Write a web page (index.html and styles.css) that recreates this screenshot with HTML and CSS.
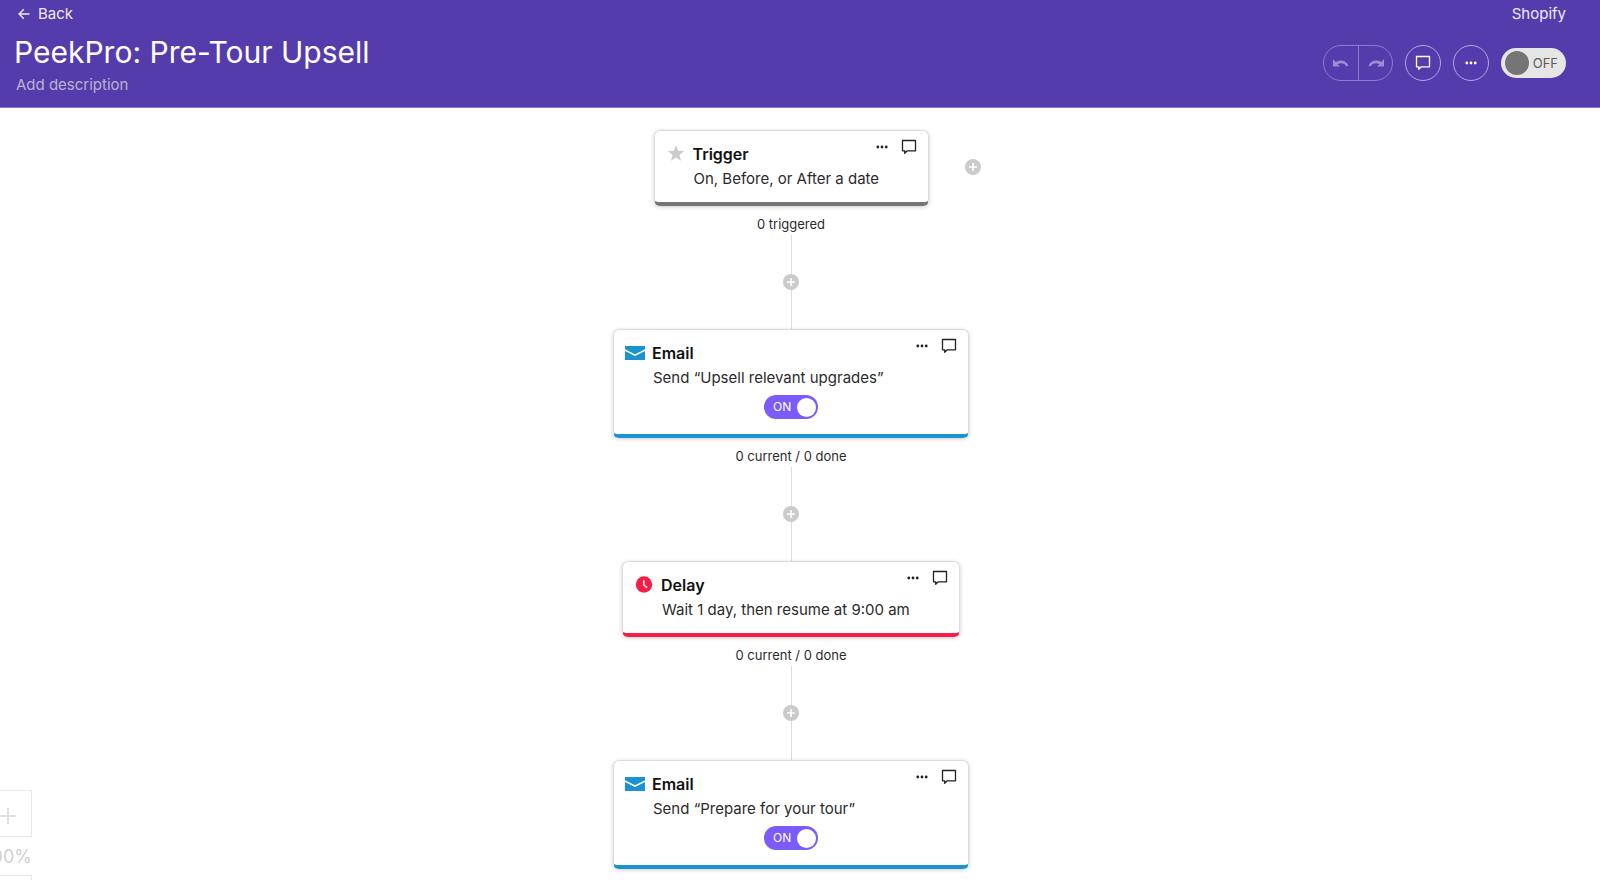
FILE: index.html
```html
<!DOCTYPE html>
<html lang="en">
<head>
    <meta charset="UTF-8">
    <meta name="viewport" content="width=device-width, initial-scale=1.0">
    <title>PeekPro: Pre-Tour Upsell</title>
    <link rel="stylesheet" href="styles.css">
</head>
<body>
    <!-- Shared icons -->
    <svg class="sprite" aria-hidden="true">
        <symbol id="comment" viewBox="0 0 16 16">
            <path d="M1.500 1.500h13v10.300H6.200L3.700 14.200V11.800H1.500z" fill="none" stroke="currentColor" stroke-width="1.300" stroke-linejoin="round"/>
        </symbol>
        <symbol id="dots" viewBox="0 0 14 14">
            <circle cx="2.800" cy="7" r="1.400"/><circle cx="7" cy="7" r="1.400"/><circle cx="11.200" cy="7" r="1.400"/>
        </symbol>
        <symbol id="add" viewBox="0 0 16 16">
            <circle cx="8" cy="8" r="8" fill="#cbcbcb"/>
            <path d="M8 4v8M4 8h8" stroke="#fff" stroke-width="1.600"/>
        </symbol>
        <symbol id="mail" viewBox="0 0 20 14">
            <path d="M0 0h20v3.300L10 8.200 0 3.300z"/>
            <path d="M0 5.100l10 5 10-5V14H0z"/>
        </symbol>
        <symbol id="undo" viewBox="0 0 18 12">
            <path d="M1 2v7.500h7L5.600 7.200C8.600 5.400 12.300 5.800 14.500 9.400l2-.9C13.900 3.200 8.300 2.200 3.700 5z"/>
        </symbol>
    </svg>

    <header class="header">
        <div class="header-top">
            <a href="#" class="back">
                <svg class="back-icon" viewBox="0 0 12 12"><path d="M11.500 6H1.200M5.800 1.300L1.100 6l4.700 4.700" fill="none" stroke="currentColor" stroke-width="1.400"/></svg>
                Back
            </a>
            <a href="#" class="store">Shopify</a>
        </div>
        <div class="header-main">
            <div class="heading">
                <h1>PeekPro: Pre-Tour Upsell</h1>
                <input type="text" class="description" placeholder="Add description" aria-label="Description">
            </div>
            <div class="actions">
                <div class="history">
                    <button type="button" aria-label="Undo" disabled><svg class="history-icon"><use href="#undo"/></svg></button>
                    <button type="button" aria-label="Redo" disabled><svg class="history-icon redo"><use href="#undo"/></svg></button>
                </div>
                <button type="button" class="round-btn" aria-label="Comments"><svg class="icon-comment"><use href="#comment"/></svg></button>
                <button type="button" class="round-btn" aria-label="More"><svg class="icon-dots"><use href="#dots"/></svg></button>
                <label class="switch switch-large"><input type="checkbox">OFF</label>
            </div>
        </div>
    </header>

    <main class="canvas">
        <section class="node">
            <div class="card trigger">
                <svg class="card-icon" viewBox="0 0 20 24"><path d="M10 3l2.100 5.800 6.100.3-4.800 3.800 1.700 5.900L10 15.500l-5.100 3.300 1.700-5.900-4.800-3.800 6.100-.3z"/></svg>
                <div class="card-body">
                    <h2>Trigger</h2>
                    <p>On, Before, or After a date</p>
                </div>
                <div class="card-tools">
                    <button type="button" aria-label="More"><svg class="icon-dots"><use href="#dots"/></svg></button>
                    <button type="button" aria-label="Comments"><svg class="icon-comment"><use href="#comment"/></svg></button>
                </div>
                <button type="button" class="add-btn add-side" aria-label="Add trigger"><svg><use href="#add"/></svg></button>
            </div>
            <p class="status">0 triggered</p>
            <div class="connector">
                <button type="button" class="add-btn" aria-label="Add step"><svg><use href="#add"/></svg></button>
            </div>
        </section>

        <section class="node">
            <div class="card email">
                <svg class="card-icon"><use href="#mail"/></svg>
                <div class="card-body">
                    <h2>Email</h2>
                    <p>Send “Upsell relevant upgrades”</p>
                </div>
                <div class="card-tools">
                    <button type="button" aria-label="More"><svg class="icon-dots"><use href="#dots"/></svg></button>
                    <button type="button" aria-label="Comments"><svg class="icon-comment"><use href="#comment"/></svg></button>
                </div>
                <label class="switch"><input type="checkbox" checked>ON</label>
            </div>
            <p class="status">0 current / 0 done</p>
            <div class="connector">
                <button type="button" class="add-btn" aria-label="Add step"><svg><use href="#add"/></svg></button>
            </div>
        </section>

        <section class="node">
            <div class="card delay">
                <svg class="card-icon" viewBox="0 0 20 24"><circle cx="10" cy="11.500" r="8.200"/><path d="M9.800 7v5l3.400 2.600" fill="none" stroke="#fff" stroke-width="1.400"/></svg>
                <div class="card-body">
                    <h2>Delay</h2>
                    <p>Wait 1 day, then resume at 9:00 am</p>
                </div>
                <div class="card-tools">
                    <button type="button" aria-label="More"><svg class="icon-dots"><use href="#dots"/></svg></button>
                    <button type="button" aria-label="Comments"><svg class="icon-comment"><use href="#comment"/></svg></button>
                </div>
            </div>
            <p class="status">0 current / 0 done</p>
            <div class="connector">
                <button type="button" class="add-btn" aria-label="Add step"><svg><use href="#add"/></svg></button>
            </div>
        </section>

        <section class="node">
            <div class="card email">
                <svg class="card-icon"><use href="#mail"/></svg>
                <div class="card-body">
                    <h2>Email</h2>
                    <p>Send “Prepare for your tour”</p>
                </div>
                <div class="card-tools">
                    <button type="button" aria-label="More"><svg class="icon-dots"><use href="#dots"/></svg></button>
                    <button type="button" aria-label="Comments"><svg class="icon-comment"><use href="#comment"/></svg></button>
                </div>
                <label class="switch"><input type="checkbox" checked>ON</label>
            </div>
        </section>
    </main>

    <div class="zoom">
        <button type="button" aria-label="Zoom in"><svg viewBox="0 0 16 16"><path d="M8 0v16M0 8h16" stroke="#e2e2e2" stroke-width="2"/></svg></button>
        <span>100%</span>
        <button type="button" aria-label="Zoom out"><svg viewBox="0 0 16 16"><path d="M0 8h16" stroke="#e2e2e2" stroke-width="2"/></svg></button>
    </div>
</body>
</html>
```
FILE: styles.css
```css
* {
    box-sizing: border-box;
}

body {
    margin: 0;
    height: 100vh;
    overflow: hidden;
    font-family: Inter, "Liberation Sans", sans-serif;
    font-size: 15px;
    line-height: 24px;
    color: #2b2b2b;
    background: #fff;
}

h1, h2, p {
    margin: 0;
}

button {
    display: flex;
    align-items: center;
    justify-content: center;
    padding: 0;
    border: none;
    background: none;
    color: inherit;
    cursor: pointer;
}

svg {
    display: block;
    fill: currentColor;
}

.sprite {
    position: absolute;
    width: 0;
    height: 0;
}

.icon-comment {
    width: 16px;
    height: 16px;
}

.icon-dots {
    width: 14px;
    height: 14px;
}

/* Header */
.header {
    padding: 2px 34px 10px 14px;
    background: #543cad;
    border-bottom: 1px solid #8776c6;
    color: #fff;
}

.header-top, .header-main {
    display: flex;
    justify-content: space-between;
}

.back, .store {
    display: flex;
    align-items: center;
    color: #eeebf8;
    text-decoration: none;
}

.back {
    gap: 8px;
    padding-left: 4px;
}

.back-icon {
    width: 12px;
    height: 12px;
}

.header-main {
    align-items: center;
}

h1 {
    padding-top: 8px;
    font-size: 30px;
    font-weight: 400;
    line-height: 36px;
}

.description {
    display: block;
    width: 300px;
    height: 24px;
    margin-top: 3px;
    padding: 0 2px;
    border: none;
    outline: none;
    background: none;
    color: #fff;
    font: inherit;
}

.description::placeholder {
    color: #b9b4cd;
    opacity: 1;
}

.actions {
    display: flex;
    align-items: center;
    gap: 12px;
    padding-top: 3px;
}

.history {
    display: flex;
    border: 1px solid #8d7cc9;
    border-radius: 18px;
    color: #9c8fcf;
}

.history button {
    width: 34px;
    height: 34px;
}

.history button + button {
    border-left: 1px solid #8d7cc9;
}

.history-icon {
    width: 18px;
    height: 12px;
}

.redo {
    transform: scaleX(-1);
}

.round-btn {
    width: 36px;
    height: 36px;
    border: 1px solid #b5a9e0;
    border-radius: 50%;
}

/* Switches */
.switch {
    display: flex;
    flex-direction: row-reverse;
    align-items: center;
    justify-content: space-between;
    width: 54px;
    height: 24px;
    padding: 0 2px 0 9px;
    border-radius: 12px;
    background: #7b5cfa;
    color: #fff;
    font-size: 12px;
    cursor: pointer;
}

.switch input {
    appearance: none;
    width: 19px;
    height: 19px;
    margin: 0;
    border-radius: 50%;
    background: #fff;
}

.switch-large {
    flex-direction: row;
    width: 65px;
    height: 30px;
    padding: 0 8px 0 4px;
    border-radius: 15px;
    background: #e6e6e6;
    color: #5c5c5c;
    font-size: 13px;
}

.switch-large input {
    width: 24px;
    height: 24px;
    background: #757575;
}

/* Flow */
.canvas {
    display: flex;
    flex-direction: column;
    align-items: center;
    padding: 22px 18px 0 0;
}

.node {
    display: flex;
    flex-direction: column;
    align-items: center;
}

.card {
    position: relative;
    display: grid;
    grid-template-columns: 20px 1fr;
    column-gap: 7px;
    padding: 11px;
    border: 1px solid #dcdcdc;
    border-bottom: 4px solid;
    border-radius: 6px;
    box-shadow: 0 1px 4px rgba(0, 0, 0, 0.2);
}

.card-icon {
    width: 20px;
    height: 24px;
}

.card h2 {
    color: #111;
    font-size: 16px;
    font-weight: 600;
    line-height: 24px;
}

.card-body p {
    padding: 1px 0 0 1px;
    line-height: 24px;
    white-space: nowrap;
}

.card-tools {
    position: absolute;
    top: 8px;
    right: 11px;
    display: flex;
    align-items: center;
    gap: 12px;
    color: #222;
}

.card .switch {
    grid-column: 1 / -1;
    justify-self: center;
    margin: 5px 0 4px;
}

.trigger {
    width: 275px;
    border-bottom-color: #757575;
}

.trigger .card-icon {
    color: #cbcbcb;
}

.email {
    width: 356px;
    border-bottom-color: #1a93d0;
}

.email .card-icon {
    color: #1a93d0;
}

.delay {
    width: 338px;
    border-bottom-color: #f71e46;
}

.delay .card-icon {
    color: #f71e46;
}

.status {
    padding: 8px 0 1px;
    font-size: 13px;
    line-height: 20px;
}

.connector {
    display: flex;
    align-items: center;
    justify-content: center;
    width: 16px;
    height: 94px;
    background: linear-gradient(#dcdcdc, #dcdcdc) center / 1px 100% no-repeat;
}

.add-btn svg {
    width: 16px;
    height: 16px;
}

.add-side {
    position: absolute;
    top: 28px;
    right: -53px;
}

/* Zoom controls, half tucked behind the left edge */
.zoom {
    position: fixed;
    top: 790px;
    left: -16px;
    display: flex;
    flex-direction: column;
    align-items: flex-end;
    width: 48px;
    color: #cfcfcf;
    font-size: 18px;
}

.zoom button {
    width: 48px;
    height: 47px;
    padding-top: 5px;
    border: 1px solid #e8e8e8;
}

.zoom svg {
    width: 16px;
    height: 16px;
}

.zoom span {
    margin: 8px 0 6px;
}
```
